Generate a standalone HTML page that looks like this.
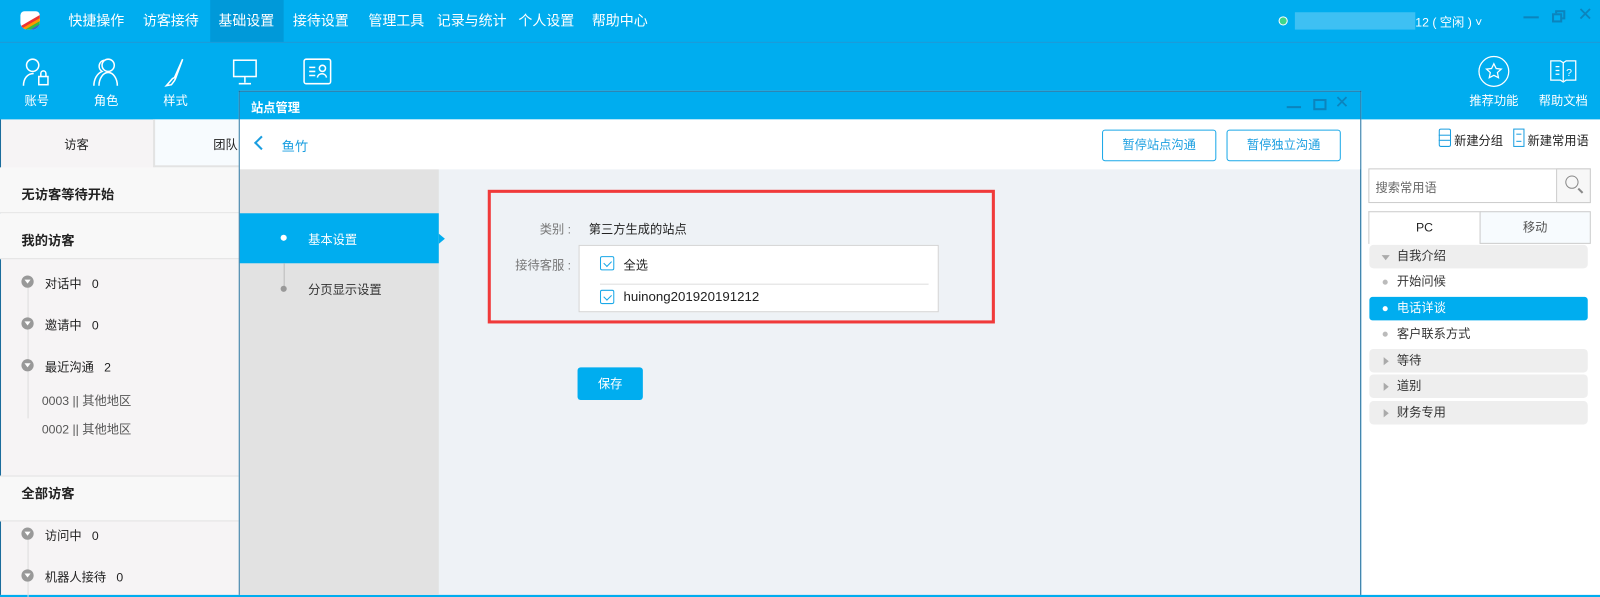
<!DOCTYPE html>
<html><head><meta charset="utf-8"><style>
*{margin:0;padding:0;box-sizing:border-box}
body{width:1600px;height:583px;overflow:hidden;position:relative;background:#00adef;font-family:"Liberation Sans","Noto Sans CJK SC",sans-serif;font-size:12px;color:#222}
#w{position:absolute;left:0;top:0;width:1568px;height:572px;transform:scale(1.0204);transform-origin:0 0}
.a{position:absolute}
.nav span{position:absolute;top:0;height:41px;line-height:42px;color:#fff;font-size:13.7px}
.tb{position:absolute;color:#fff;font-size:12px;text-align:center;width:50px}
.tb svg{display:block;margin:0 auto 4px}
.row{position:absolute;left:0;width:234px;border-bottom:1px solid #e2e2e2}
.dot{position:absolute;width:12px;height:12px;border-radius:6px;background:#999}
.dot:after{content:"";position:absolute;left:3px;top:4px;border-left:3px solid transparent;border-right:3px solid transparent;border-top:4px solid #fff}
.cb{position:absolute;width:14px;height:14px;border:1px solid #1aa8e8;border-radius:2px;background:#fff}
.cb:after{content:"";position:absolute;left:3px;width:6px;height:4px;border-left:1.5px solid #1aa8e8;border-bottom:1.5px solid #1aa8e8;transform:rotate(-45deg);top:3px}
.grp{position:absolute;left:1342px;width:214px;height:23px;background:#eeeeee;border-radius:4px;line-height:23px;padding-left:27px;font-size:12px;color:#333}
.grp i{position:absolute;left:14px;top:8px;border-top:4px solid transparent;border-bottom:4px solid transparent;border-left:5px solid #aaa}
.it{position:absolute;left:1342px;width:214px;height:23px;line-height:23px;padding-left:27px;color:#333}
.it b{position:absolute;left:13px;top:9px;width:5px;height:5px;border-radius:3px;background:#bbb}
</style></head><body><div id="w">
<div class="a" style="left:0;top:41px;width:1568px;height:1px;background:#1e9ad6"></div>
<div class="a" style="left:206px;top:0;width:72px;height:41px;background:#0099d9"></div>
<div class="a" style="left:20px;top:11px;width:19px;height:18px;background:#fff;border-radius:4px 4px 7px 7px;overflow:hidden">
<div class="a" style="left:-2px;top:8px;width:28px;height:3px;background:#e33;transform:rotate(-30deg)"></div>
<div class="a" style="left:-2px;top:11px;width:28px;height:3px;background:#f90;transform:rotate(-30deg)"></div>
<div class="a" style="left:-2px;top:14px;width:28px;height:3px;background:#3b4;transform:rotate(-30deg)"></div>
<div class="a" style="left:-2px;top:17px;width:28px;height:3px;background:#36c;transform:rotate(-30deg)"></div></div>
<div class="nav">
<span style="left:67px">快捷操作</span><span style="left:140px">访客接待</span><span style="left:214px">基础设置</span><span style="left:287px">接待设置</span><span style="left:361px">管理工具</span><span style="left:428px">记录与统计</span><span style="left:508px">个人设置</span><span style="left:580px">帮助中心</span>
</div>
<div class="a" style="left:1253px;top:16px;width:9px;height:9px;border-radius:5px;background:#3fd68a;border:1px solid #fff"></div>
<div class="a" style="left:1269px;top:12px;width:118px;height:17px;background:#3ec0f3"></div>
<div class="a" style="left:1387px;top:13px;color:#fff;font-size:12px">12 ( 空闲 ) ˅</div>
<div class="a" style="left:1493px;top:16px;width:15px;height:2px;background:#0b84bd"></div>
<div class="a" style="left:1524px;top:10px;width:10px;height:9px;border:2px solid #0b84bd"></div>
<div class="a" style="left:1521px;top:13px;width:10px;height:9px;border:2px solid #0b84bd;background:#00adef"></div>
<div class="a" style="left:1546px;top:4px;color:#0b84bd;font-size:18px">✕</div>
<div class="tb" style="left:11px;top:56px"><svg width="30" height="30" viewBox="0 0 30 30" fill="none" stroke="#fff" stroke-width="1.5"><circle cx="11" cy="8" r="6"/><path d="M2 28c0-7 4-12 10-12"/><rect x="17" y="19" width="9" height="8"/><path d="M19 19v-3a2.5 2.5 0 015 0v3"/></svg>账号</div>
<div class="tb" style="left:79px;top:56px"><svg width="30" height="30" viewBox="0 0 30 30" fill="none" stroke="#fff" stroke-width="1.5"><circle cx="17" cy="8" r="6"/><path d="M8 28c0-7 4-13 9-13s9 6 9 13"/><path d="M13 3a6 6 0 00-2 11c-5 2-8 8-8 14"/></svg>角色</div>
<div class="tb" style="left:147px;top:56px"><svg width="30" height="30" viewBox="0 0 30 30" fill="none" stroke="#fff" stroke-width="1.5"><path d="M22 2L14 20l-2 1-6 7 5-1 3-4 1-2z"/></svg>样式</div>
<div class="tb" style="left:215px;top:56px"><svg width="30" height="30" viewBox="0 0 30 30" fill="none" stroke="#fff" stroke-width="1.5"><rect x="4" y="3" width="22" height="16"/><path d="M15 19v6M9 26h12"/></svg>站</div>
<div class="tb" style="left:286px;top:56px"><svg width="30" height="30" viewBox="0 0 30 30" fill="none" stroke="#fff" stroke-width="1.5"><rect x="2" y="2" width="26" height="24" rx="2"/><path d="M7 10h6M7 14h6M7 18h6"/><circle cx="20" cy="11" r="3"/><path d="M15 20c1-5 8-5 9 0"/></svg></div>
<div class="tb" style="left:1436px;top:54px;width:56px"><svg width="32" height="32" viewBox="0 0 34 34" fill="none" stroke="#fff" stroke-width="1.3"><circle cx="17" cy="17" r="15.5"/><path d="M17 9l2.4 5 5.3.6-4 3.6 1.1 5.3L17 21l-4.8 2.5 1.1-5.3-4-3.6 5.3-.6z"/></svg>推荐功能</div>
<div class="tb" style="left:1504px;top:54px;width:56px"><svg width="32" height="32" viewBox="0 0 34 34" fill="none" stroke="#fff" stroke-width="1.3"><path d="M4 6h10l3 2 3-2h10v20H20l-3 2-3-2H4z"/><path d="M9 12h4M9 16h4M9 20h4M17 8v19"/><text x="20" y="22" fill="#fff" stroke="none" font-size="11" font-family="Liberation Sans">?</text></svg>帮助文档</div>
<div class="a" style="left:0;top:117px;width:235px;height:466px;background:#f6f4f5;border-left:1px solid #1a6c9c"></div>
<div class="a" style="left:150px;top:117px;width:90px;height:47px;background:#f7fbfe;border-left:2px solid #e3e3e3;border-bottom:2px solid #e3e3e3"></div>
<div class="a" style="left:63px;top:133px;font-size:12px">访客</div>
<div class="a" style="left:209px;top:133px;font-size:12px">团队</div>
<div class="row" style="top:164px;height:45px;background:#f8f8f8"></div>
<div class="a" style="left:21px;top:180px;font-weight:bold;font-size:13px">无访客等待开始</div>
<div class="row" style="top:209px;height:45px;background:#f8f8f8"></div>
<div class="a" style="left:21px;top:225px;font-weight:bold;font-size:13px">我的访客</div>
<div class="a" style="left:27px;top:275px;width:1px;height:135px;background:#ddd"></div>
<div class="dot" style="left:21px;top:270px"></div><div class="a" style="left:44px;top:269px">对话中 &nbsp; 0</div>
<div class="dot" style="left:21px;top:311px"></div><div class="a" style="left:44px;top:310px">邀请中 &nbsp; 0</div>
<div class="dot" style="left:21px;top:352px"></div><div class="a" style="left:44px;top:351px">最近沟通 &nbsp; 2</div>
<div class="a" style="left:41px;top:384px;color:#555">0003 || 其他地区</div>
<div class="a" style="left:41px;top:412px;color:#555">0002 || 其他地区</div>
<div class="row" style="top:466px;height:45px;background:#f8f8f8;border-top:1px solid #e2e2e2"></div>
<div class="a" style="left:21px;top:473px;font-weight:bold;font-size:13px">全部访客</div>
<div class="a" style="left:27px;top:525px;width:1px;height:60px;background:#ddd"></div>
<div class="dot" style="left:21px;top:517px"></div><div class="a" style="left:44px;top:516px">访问中 &nbsp; 0</div>
<div class="dot" style="left:21px;top:558px"></div><div class="a" style="left:44px;top:557px">机器人接待 &nbsp; 0</div>
<div class="a" style="left:1334px;top:117px;width:266px;height:466px;background:#fff"></div>
<div class="a" style="left:1410px;top:126px;width:12px;height:18px;border:1.5px solid #1a9ee0;border-radius:2px"></div>
<div class="a" style="left:1410px;top:132px;width:12px;height:6px;border-top:1.5px solid #1a9ee0;border-bottom:1.5px solid #1a9ee0"></div>
<div class="a" style="left:1425px;top:129px;font-size:12px">新建分组</div>
<div class="a" style="left:1483px;top:126px;width:11px;height:18px;border:1.5px solid #1a9ee0"></div>
<div class="a" style="left:1486px;top:131px;width:5px;height:8px;border-top:1px solid #1a9ee0;border-bottom:1px solid #1a9ee0"></div>
<div class="a" style="left:1497px;top:129px;font-size:12px">新建常用语</div>
<div class="a" style="left:1341px;top:165px;width:218px;height:34px;border:1px solid #ccc"></div>
<div class="a" style="left:1525px;top:165px;width:34px;height:34px;border:1px solid #ccc;background:#f7f7f7"></div>
<div class="a" style="left:1534px;top:172px;width:13px;height:13px;border:1.5px solid #888;border-radius:7px"></div>
<div class="a" style="left:1546px;top:186px;width:6px;height:1.5px;background:#888;transform:rotate(45deg)"></div>
<div class="a" style="left:1348px;top:175px;color:#666">搜索常用语</div>
<div class="a" style="left:1341px;top:207px;width:110px;height:32px;border:1px solid #ccc;border-bottom:none;background:#fff;text-align:center;line-height:30px">PC</div>
<div class="a" style="left:1450px;top:207px;width:109px;height:32px;border:1px solid #ccc;background:#f7fbfe;text-align:center;line-height:30px;color:#555">移动</div>
<div class="grp" style="top:240px"><i style="border-left:4px solid transparent;border-right:4px solid transparent;border-top:5px solid #aaa;border-bottom:none;top:10px;left:12px"></i>自我介绍</div>
<div class="it" style="top:265px"><b></b>开始问候</div>
<div class="it" style="top:291px;background:#00adef;color:#fff;border-radius:3px"><b style="background:#fff"></b>电话详谈</div>
<div class="it" style="top:316px"><b></b>客户联系方式</div>
<div class="grp" style="top:342px"><i></i>等待</div>
<div class="grp" style="top:367px"><i></i>道别</div>
<div class="grp" style="top:393px"><i></i>财务专用</div>
<div class="a" style="left:234px;top:89px;width:1100px;height:494px;border:1px solid #1a6c9c;border-bottom:none;background:#eef2f6"></div>
<div class="a" style="left:235px;top:90px;width:1098px;height:27px;background:#00adef"></div>
<div class="a" style="left:246px;top:97px;color:#fff;font-weight:bold;font-size:12px">站点管理</div>
<div class="a" style="left:1261px;top:104px;width:14px;height:2px;background:#0b84bd"></div>
<div class="a" style="left:1287px;top:97px;width:13px;height:11px;border:2px solid #0b84bd"></div>
<div class="a" style="left:1308px;top:91px;color:#0b84bd;font-size:17px">✕</div>
<div class="a" style="left:235px;top:117px;width:1098px;height:49px;background:#fff"></div>
<div class="a" style="left:251px;top:135px;width:10px;height:10px;border-left:2px solid #1a9ee0;border-bottom:2px solid #1a9ee0;transform:rotate(45deg)"></div>
<div class="a" style="left:276px;top:133px;color:#1a9ee0;font-size:13px">鱼竹</div>
<div class="a" style="left:1080px;top:127px;width:112px;height:31px;border:1px solid #1aa8e8;border-radius:3px;text-align:center;line-height:29px;color:#1a9ee0">暂停站点沟通</div>
<div class="a" style="left:1202px;top:127px;width:112px;height:31px;border:1px solid #1aa8e8;border-radius:3px;text-align:center;line-height:29px;color:#1a9ee0">暂停独立沟通</div>
<div class="a" style="left:235px;top:166px;width:195px;height:417px;background:#e2e2e2"></div>
<div class="a" style="left:235px;top:209px;width:195px;height:49px;background:#00adef"></div>
<div class="a" style="left:430px;top:229px;border-top:5px solid transparent;border-bottom:5px solid transparent;border-left:6px solid #00adef"></div>
<div class="a" style="left:275px;top:230px;width:6px;height:6px;border-radius:3px;background:#fff"></div>
<div class="a" style="left:302px;top:226px;color:#fff">基本设置</div>
<div class="a" style="left:278px;top:258px;width:1px;height:25px;background:#bbb"></div>
<div class="a" style="left:275px;top:280px;width:6px;height:6px;border-radius:3px;background:#999"></div>
<div class="a" style="left:302px;top:275px;color:#333">分页显示设置</div>
<div class="a" style="left:478px;top:186px;width:497px;height:131px;border:3px solid #f03a3a"></div>
<div class="a" style="left:529px;top:216px;color:#777">类别 :</div>
<div class="a" style="left:577px;top:216px;color:#222">第三方生成的站点</div>
<div class="a" style="left:505px;top:251px;color:#777">接待客服 :</div>
<div class="a" style="left:567px;top:240px;width:353px;height:66px;background:#fff;border:1px solid #d4d4d4"></div>
<div class="cb" style="left:588px;top:251px"></div><div class="a" style="left:611px;top:251px">全选</div>
<div class="a" style="left:588px;top:278px;width:322px;height:1px;background:#ddd"></div>
<div class="cb" style="left:588px;top:284px"></div><div class="a" style="left:611px;top:283px;font-size:13px">huinong201920191212</div>
<div class="a" style="left:566px;top:360px;width:64px;height:32px;background:#00adef;border-radius:3px;color:#fff;text-align:center;line-height:32px">保存</div>
</div></body></html>
